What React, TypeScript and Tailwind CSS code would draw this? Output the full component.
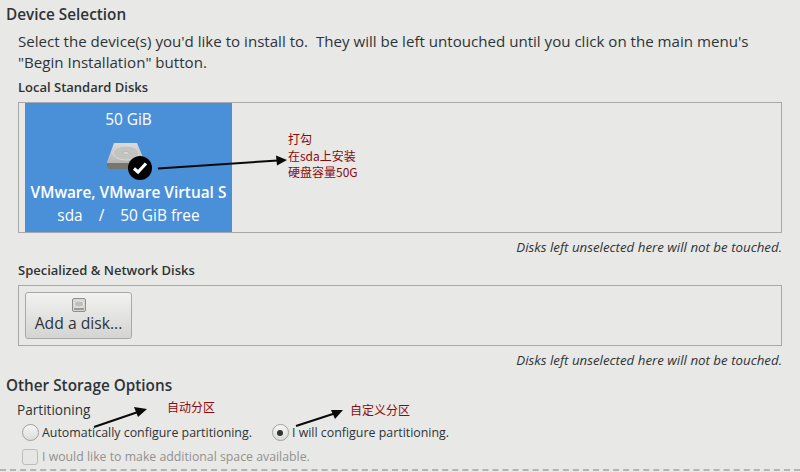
import React from 'react'

const cjk = { fontFamily: '"Noto Sans CJK SC", "Noto Sans", sans-serif' }

// 截图上的红字批注
function Note({ className, lines }: { className: string; lines: string[] }) {
  return (
    <div className={`absolute text-[12px] leading-[16.5px] text-[#8b0a0a] whitespace-nowrap ${className}`} style={cjk}>
      {lines.map((l) => (
        <div key={l}>{l}</div>
      ))}
    </div>
  )
}

// 批注箭头，整张图的坐标系
function Arrows() {
  return (
    <svg className="absolute left-0 top-0 pointer-events-none" width="800" height="472" viewBox="0 0 800 472">
      <g stroke="#0a0a0a" strokeWidth="2" fill="#0a0a0a">
        <line x1="158" y1="168.5" x2="278" y2="160.5" />
        <polygon stroke="none" points="287,160 276,155.5 277,165.5" />
        <line x1="94" y1="427" x2="138" y2="412" />
        <polygon stroke="none" points="147,409 134,407 138,417" />
        <line x1="296" y1="426" x2="339" y2="412" />
        <polygon stroke="none" points="343,410 331,410 335,419" />
      </g>
    </svg>
  )
}

function DiskIcon() {
  return (
    <div className="relative w-[46px] h-[40px]">
      <svg width="40" height="29" viewBox="0 0 40 29" className="absolute left-0 top-0">
        <defs>
          <linearGradient id="hd" x1="0" y1="0" x2="0" y2="1">
            <stop offset="0" stopColor="#dcdcd9" />
            <stop offset="1" stopColor="#a9a9a5" />
          </linearGradient>
        </defs>
        <path d="M8 1 H31 L39 20 V25 Q39 27 37 27 H3 Q1 27 1 25 V20 Z" fill="url(#hd)" />
        <path d="M1 21 H39 V25 Q39 27 37 27 H3 Q1 27 1 25 Z" fill="#77766f" />
        <ellipse cx="20" cy="11" rx="13" ry="7" fill="#c3c3bf" stroke="#dcdcd9" strokeWidth="0.8" />
        <ellipse cx="20" cy="11" rx="3" ry="1.5" fill="#d8d8d5" stroke="#a8a8a4" strokeWidth="0.5" />
      </svg>
      <div className="absolute left-[22px] top-[14px] w-6 h-6 rounded-full bg-black flex items-center justify-center">
        <svg width="16" height="14" viewBox="0 0 16 14">
          <path d="M2 7.5 L6 11 L14 2.5" fill="none" stroke="#fff" strokeWidth="3.2" />
        </svg>
      </div>
    </div>
  )
}

function SmallDisk() {
  return (
    <svg width="14" height="14" viewBox="0 0 14 14">
      <rect x="0.5" y="0.5" width="13" height="13" rx="1.5" fill="#d6d6d3" stroke="#8f8f8b" />
      <ellipse cx="7" cy="6" rx="4.5" ry="3" fill="#bdbdb9" stroke="#f0f0ee" strokeWidth="0.7" />
      <rect x="2" y="10" width="10" height="2" fill="#9a9a96" />
    </svg>
  )
}

export default function App() {
  return (
    <div
      className="relative w-[800px] h-[472px] overflow-hidden bg-[#e8e8e7] text-[#2e3436] pl-[6px] pt-[5px]"
      style={{ fontFamily: '"Open Sans", "Noto Sans", sans-serif' }}
    >
      <h2 className="text-[15.3px] font-semibold leading-[18px]">Device Selection</h2>

      <div className="pl-3 pr-[18px]">
        <p className="text-[15.1px] leading-[21px] mt-[8px] whitespace-nowrap">
          Select the device(s) you'd like to install to.&nbsp; They will be left untouched until you click on the main menu's
          <br />
          "Begin Installation" button.
        </p>

        <div className="text-[13px] font-semibold leading-4 mt-[6px]">Local Standard Disks</div>
        <div className="h-[131px] mt-[7px] border border-[#a9a9a7] pl-[6px]">
          <div className="w-[207px] h-[129px] bg-[#4a90d9] text-white flex flex-col items-center">
            <div className="text-[15.4px] leading-4 mt-[9px]">50 GiB</div>
            <div className="mt-[14px] ml-[1px]">
              <DiskIcon />
            </div>
            <div className="text-[15.4px] font-semibold leading-[18px] whitespace-nowrap mt-[2px]">VMware, VMware Virtual S</div>
            <div className="text-[15.4px] leading-4 mt-[6px] whitespace-pre">sda    /    50 GiB free</div>
          </div>
        </div>
        <div className="text-[13.3px] italic text-right leading-4 mt-[6px]">Disks left unselected here will not be touched.</div>

        <div className="text-[13px] font-semibold leading-4 mt-[7px]">Specialized &amp; Network Disks</div>
        <div className="h-[61px] mt-[7px] border border-[#a9a9a7] pl-[6px] pt-[6px]">
          <button className="w-[107px] h-[47px] rounded-[3px] border border-[#a8a8a5] bg-gradient-to-b from-[#f2f2f1] to-[#d4d4d2] flex flex-col items-center pt-[5px] text-[15.7px] font-medium leading-[18px]">
            <SmallDisk />
            <span className="mt-[2px]">Add a disk...</span>
          </button>
        </div>
        <div className="text-[13.3px] italic text-right leading-4 mt-[6px]">Disks left unselected here will not be touched.</div>
      </div>

      <h2 className="text-[15.3px] font-semibold leading-[18px] mt-[8px]">Other Storage Options</h2>
      <div className="pl-3">
        <div className="text-[13.6px] font-medium leading-4 mt-[8px] ml-[-1px]">Partitioning</div>
        <div className="flex items-center mt-[6px] pl-[4px] text-[12.4px] leading-4">
          <span className="w-[17px] h-[17px] rounded-full border border-[#a0a09d] bg-gradient-to-b from-[#f6f6f5] to-[#dcdcda]" />
          <span className="ml-[3px]">Automatically configure partitioning.</span>
          <span className="ml-[20px] w-[17px] h-[17px] rounded-full border border-[#a0a09d] bg-gradient-to-b from-[#f6f6f5] to-[#dcdcda] flex items-center justify-center">
            <span className="w-[6px] h-[6px] rounded-full bg-[#2e3436]" />
          </span>
          <span className="ml-[3px]">I will configure partitioning.</span>
        </div>
        <div className="flex items-center mt-[8px] pl-[4px] text-[12.3px] leading-4 text-[#92928f]">
          <span className="w-[16px] h-[16px] rounded-[3px] border border-[#bcbcba] bg-[#e6e6e5]" />
          <span className="ml-[4px]">I would like to make additional space available.</span>
        </div>
      </div>

      <div className="absolute left-0 right-0 bottom-[1px] border-t-2 border-dashed border-[#b4b4b2]" />

      <Arrows />
      <Note className="left-[288px] top-[131px]" lines={['打勾', '在sda上安装', '硬盘容量50G']} />
      <Note className="left-[167px] top-[399px]" lines={['自动分区']} />
      <Note className="left-[350px] top-[402px]" lines={['自定义分区']} />
    </div>
  )
}
